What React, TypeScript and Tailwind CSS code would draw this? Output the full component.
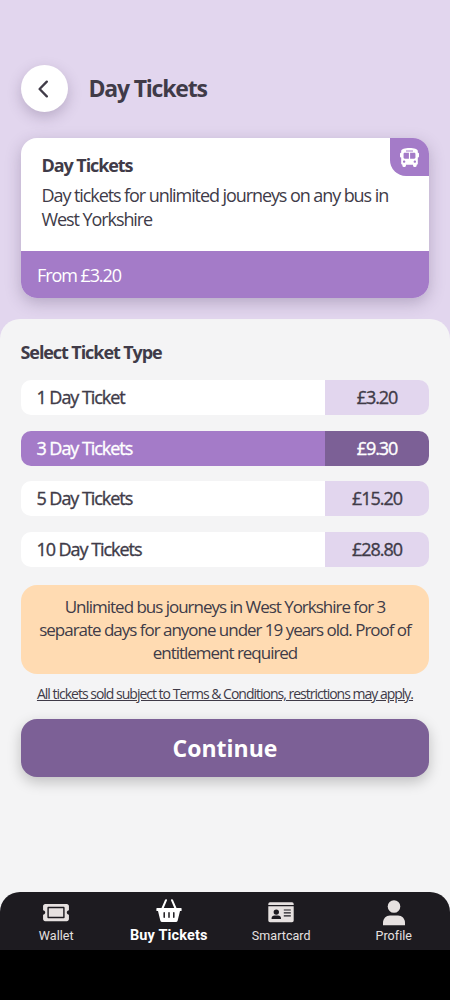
import { FaBusAlt, FaTicketAlt } from "react-icons/fa";

const tickets = [
  { name: "1 Day Ticket", price: "£3.20" },
  { name: "3 Day Tickets", price: "£9.30", active: true },
  { name: "5 Day Tickets", price: "£15.20" },
  { name: "10 Day Tickets", price: "£28.80" },
];

const BasketIcon = () => (
  <svg width="26" height="24" viewBox="0 0 26 24">
    <path d="M10 1.2 6.2 10M16 1.2 19.8 10" stroke="white" strokeWidth="2" strokeLinecap="round" />
    <path
      d="M1 9h24a.6.6 0 0 1 .6.6v1.9a.6.6 0 0 1-.6.6h-1l-2.3 9.4a2 2 0 0 1-2 1.5H6.3a2 2 0 0 1-2-1.5L2 12.1H1a.6.6 0 0 1-.6-.6V9.6A.6.6 0 0 1 1 9z"
      fill="white"
    />
    <path d="M8.2 13.8v4.4M13 13.8v4.4M17.8 13.8v4.4" stroke="#1d1b20" strokeWidth="1.5" strokeLinecap="round" />
  </svg>
);

const CardIcon = () => (
  <svg width="26" height="21" viewBox="0 0 26 21" fill="#e6e1e0">
    <path d="M2 .3h22A1.7 1.7 0 0 1 25.7 2v1H.3V2A1.7 1.7 0 0 1 2 .3z" />
    <path d="M.3 4.2h25.4v14.4a1.7 1.7 0 0 1-1.7 1.7H2a1.7 1.7 0 0 1-1.7-1.7z" />
    <circle cx="8.3" cy="10.1" r="2.7" fill="#1d1b20" />
    <path d="M3.6 16.9v-.7c0-1.8 1.3-2.6 2.9-2.6h3.6c1.6 0 2.9.8 2.9 2.6v.7z" fill="#1d1b20" />
    <path d="M15.8 8h7M15.8 10.9h7M15.8 13.8h7" stroke="#1d1b20" strokeWidth="1.2" />
  </svg>
);

const ProfileIcon = () => (
  <svg width="24" height="26" viewBox="0 0 24 26" fill="#e6e1e0">
    <circle cx="12" cy="6.5" r="6.3" />
    <path d="M1 25.3v-2.7c0-4 3-7.2 7-7.2h8c4 0 7 3.2 7 7.2v2.7z" />
  </svg>
);

const navItems = [
  { label: "Wallet", icon: <FaTicketAlt className="h-[23px] w-[26px]" /> },
  { label: "Buy Tickets", icon: <BasketIcon />, active: true },
  { label: "Smartcard", icon: <CardIcon /> },
  { label: "Profile", icon: <ProfileIcon /> },
];

export default function App() {
  return (
    <div className="flex h-[1000px] w-[450px] flex-col overflow-hidden bg-[#e2d6ee] font-['Open_Sans',sans-serif] text-[#403b48]">
      {/* Header */}
      <header className="flex items-center gap-[20.5px] pt-[65px] pl-[21px]">
        <button className="flex size-[47px] items-center justify-center rounded-full bg-white shadow-[0_5px_14px_rgba(70,50,90,0.26)]">
          <svg width="12" height="18" viewBox="0 0 12 18" className="-ml-[3px]" fill="none">
            <path d="M9.8 1.6 2.6 9l7.2 7.4" stroke="#403b48" strokeWidth="2.3" strokeLinecap="round" strokeLinejoin="round" />
          </svg>
        </button>
        <h1 className="text-[23px] leading-[47px] font-bold tracking-[-1.2px] whitespace-nowrap">Day Tickets</h1>
      </header>

      {/* Ticket summary */}
      <section className="relative mx-[21px] mt-[26px] h-[160px] shrink-0 overflow-hidden rounded-[16px] bg-white shadow-[0_5px_16px_rgba(70,50,90,0.28)]">
        <div className="absolute top-0 right-0 flex h-[38px] w-[39px] items-center justify-center rounded-bl-[16px] bg-[#a47bc8]">
          <FaBusAlt className="size-[19px] text-white" />
        </div>
        <div className="h-[113px] pt-[15px] pl-[20.5px] tracking-[-1.08px] whitespace-nowrap">
          <h2 className="text-[18px] leading-6 font-bold">Day Tickets</h2>
          <p className="mt-[6px] text-[18px] leading-6">
            Day tickets for unlimited journeys on any bus in
            <br />
            West Yorkshire
          </p>
        </div>
        <div className="h-[47px] bg-[#a47bc8] pl-[16px] text-[18px] leading-[48px] tracking-[-1.08px] text-white">From £3.20</div>
      </section>

      <main className="mt-[21px] flex min-h-0 flex-1 flex-col rounded-t-[20px] bg-[#f4f4f5] px-[21px] pt-[21px]">
        <h2 className="-ml-[0.5px] text-[18px] leading-6 font-bold tracking-[-1.08px] whitespace-nowrap">Select Ticket Type</h2>

        <div className="mt-[16.4px] flex flex-col gap-[15.4px]">
          {tickets.map((ticket) => (
            <div
              key={ticket.name}
              className={`flex h-[35px] overflow-hidden rounded-[10px] text-[18px] leading-[35px] whitespace-nowrap [-webkit-text-stroke:0.35px_currentColor] ${
                ticket.active ? "text-white" : ""
              }`}
            >
              <div className={`flex-1 pl-[15.5px] tracking-[-1.05px] ${ticket.active ? "bg-[#a47bc8]" : "bg-white"}`}>
                {ticket.name}
              </div>
              <div className={`w-[104px] text-center tracking-[-1.05px] ${ticket.active ? "bg-[#7c6096]" : "bg-[#e2d6ee]"}`}>
                {ticket.price}
              </div>
            </div>
          ))}
        </div>

        <p className="mt-[18.4px] h-[89px] shrink-0 rounded-[16px] bg-[#ffdbb2] pt-[10px] text-center text-[17px] leading-[23px] tracking-[-1.02px] whitespace-nowrap">
          Unlimited bus journeys in West Yorkshire for 3
          <br />
          separate days for anyone under 19 years old. Proof of
          <br />
          entitlement required
        </p>

        <a className="mt-[9.8px] text-center text-[14px] leading-5 tracking-[-1px] whitespace-nowrap underline">
          All tickets sold subject to Terms &amp; Conditions, restrictions may apply.
        </a>

        <button className="mt-[15px] h-[58px] shrink-0 rounded-[16px] bg-[#7c6096] text-[23px] font-bold text-white shadow-[0_5px_14px_rgba(0,0,0,0.22)]">
          Continue
        </button>
      </main>

      {/* Bottom navigation */}
      <div className="bg-[#f4f4f5]">
        <nav className="grid h-[58.5px] grid-cols-4 rounded-t-[20px] bg-[#1d1b20] font-[Roboto,sans-serif] text-[#e6e1e0]">
          {navItems.map((item) => (
            <div key={item.label} className="flex flex-col items-center pt-[6.5px] whitespace-nowrap">
              <div className={`flex h-[29px] ${item.active ? "items-start pt-px" : "items-center"}`}>{item.icon}</div>
              {item.active ? (
                <span className="text-[14.5px] leading-[17px] font-bold tracking-[0.14px] text-white">{item.label}</span>
              ) : (
                <span className="text-[12.5px] leading-[18px] tracking-[0.05px]">{item.label}</span>
              )}
            </div>
          ))}
        </nav>
        <div className="h-[50px] bg-black" />
      </div>
    </div>
  );
}
